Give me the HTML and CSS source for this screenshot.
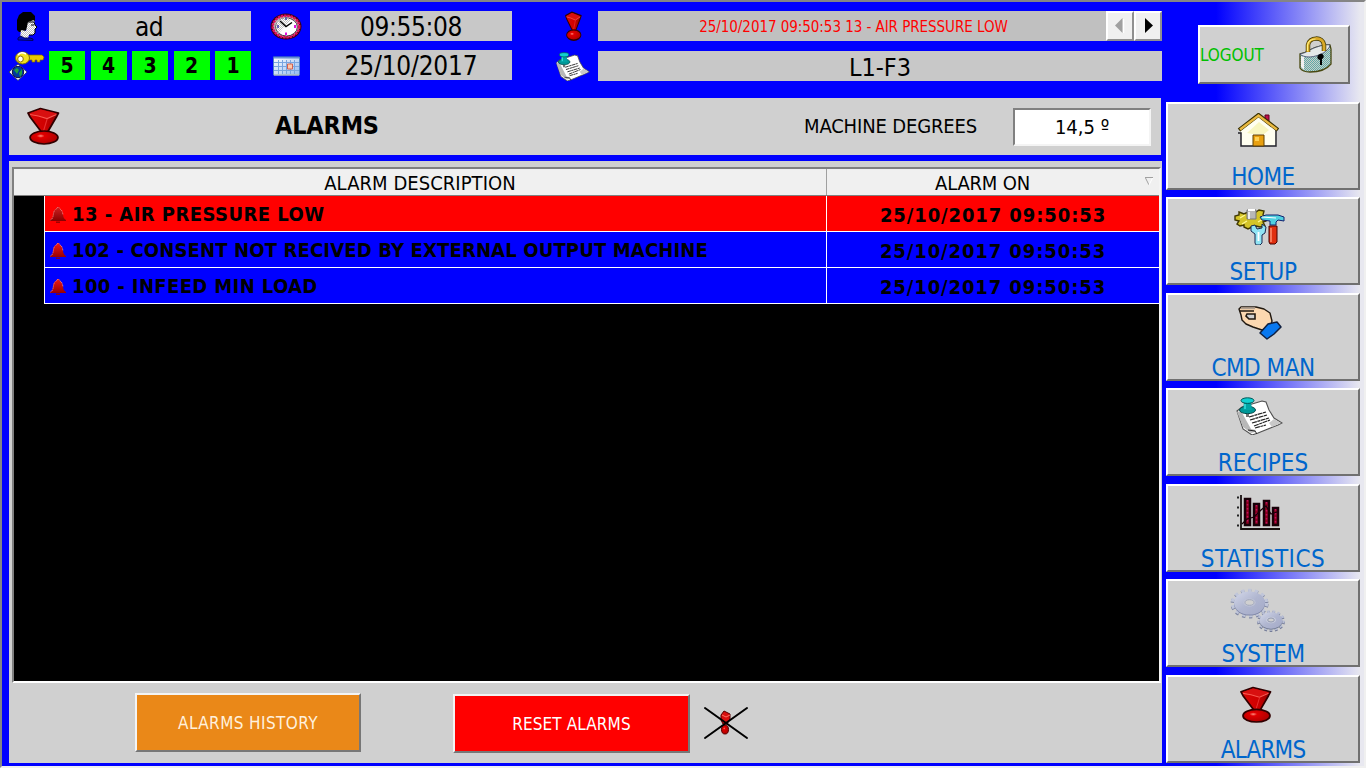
FILE: index.html
```html
<!DOCTYPE html>
<html lang="en">
<head>
<meta charset="utf-8">
<title>Alarms</title>
<link rel="stylesheet" href="styles.css">
</head>
<body>
<svg class="defs" aria-hidden="true">
  <defs>
    <linearGradient id="redCone" x1="0" y1="0" x2="1" y2="0"><stop offset="0" stop-color="#d80808"/><stop offset=".55" stop-color="#d00000"/><stop offset="1" stop-color="#8c0000"/></linearGradient>
    <radialGradient id="redBall" cx=".38" cy=".38" r=".7"><stop offset="0" stop-color="#ff9080"/><stop offset=".2" stop-color="#e00000"/><stop offset="1" stop-color="#a80000"/></radialGradient>
    <linearGradient id="bellFill" x1="0" y1="0" x2="0" y2="1"><stop offset="0" stop-color="#f01818"/><stop offset="1" stop-color="#980000"/></linearGradient>
    <linearGradient id="bellDark" x1="0" y1="0" x2="0" y2="1"><stop offset="0" stop-color="#d02020"/><stop offset="1" stop-color="#880000"/></linearGradient>
    <linearGradient id="gearFill" x1="0" y1="0" x2="1" y2="1"><stop offset="0" stop-color="#d4d8ea"/><stop offset=".5" stop-color="#b0b6d0"/><stop offset="1" stop-color="#a4aac8"/></linearGradient>
    <linearGradient id="calFill" x1="0" y1="0" x2="1" y2="1"><stop offset="0" stop-color="#fff"/><stop offset="1" stop-color="#90b8f0"/></linearGradient>
    <pattern id="dither" width="2" height="2" patternUnits="userSpaceOnUse"><rect width="2" height="2" fill="#c8d0c8"/><path d="M0 0h1v1H0zM1 1h1v1H1z" fill="#60a8a8"/></pattern>
    <pattern id="skin" width="2" height="2" patternUnits="userSpaceOnUse"><rect width="2" height="2" fill="#fff"/><path d="M0 0h1v1H0zM1 1h1v1H1z" fill="#c0c0c0"/></pattern>
  </defs>
  <symbol id="alarm" viewBox="0 0 32 38" preserveAspectRatio="none">
    <path d="M1 6 13 1.500l17.500 4.500-2 4-8.500 15h-6L3 10z" fill="url(#redCone)" stroke="#300000" stroke-width="1.700" stroke-linejoin="round"/>
    <path d="M2.500 6.500 13 2.500l16 4-9 4.500z" fill="#d81010"/>
    <path d="m3 7.500 8 1.500 8.500 2.500 9-4" fill="none" stroke="#f85850" stroke-width="1.200"/>
    <path d="m19.500 12-3.500 12" stroke="#e83030" fill="none"/>
    <ellipse cx="16.500" cy="30.500" rx="13.500" ry="6.500" fill="url(#redBall)" stroke="#300000" stroke-width="1.700"/>
  </symbol>
  <symbol id="note" viewBox="0 0 48 38" preserveAspectRatio="none">
    <path d="M2 14 7 10l20-6 4 1 3 8 5 8 8 5-4 2-20 8-6 2-9-6z" fill="#fff" stroke="#505050" stroke-width="1.100"/>
    <path d="m2 15 6 15 8 6 4-1 1-2-5-1L6 14z" fill="#b8b8b8"/><path d="m39 22 7 4-9 4-3-4z" fill="#c8c8c8"/>
    <path d="m13 33 7 1 2 3" fill="none" stroke="#222"/>
    <path d="m14 20 17-5M15 23l17-5M17 26l17-5M19 29l16-6M20 31l11-3" stroke="#222" stroke-width="1.200" stroke-dasharray="5 .6 3 .5" fill="none"/>
    <path d="M11 16v4h3v-3z" fill="#777"/>
    <ellipse cx="12.500" cy="13" rx="8" ry="3.700" fill="#009898" stroke="#004848"/>
    <path d="M9 5h7l1 8H8z" fill="#00a4a4"/>
    <ellipse cx="12.500" cy="3.600" rx="6.500" ry="2.800" fill="#10d0d0" stroke="#005858"/>
    <path d="M10 7v5" stroke="#50ffff"/>
  </symbol>
  <symbol id="bellShape" viewBox="0 0 16 16">
    <path d="M7 0h2l.5 1.500C12 2.500 12.600 5 13 8c.4 3 1.500 4 3 5v1H0v-1c2-1 2.700-2 3-5s1-5.500 3.500-6.500z"/>
    <path d="M.5 13C2.500 12 3 10 3.300 8 3.700 4.500 4.500 2.800 6.500 1.800L7.500.5h1.500L10 2c2 1 2.500 3 3 6" fill="none" stroke="#ffa0a0" stroke-width=".8" stroke-dasharray="1 .8"/>
    <path d="M6 15.200h4" stroke="#900000" stroke-width="1.300"/>
  </symbol>
</svg>

<div class="screen">
  <div class="left">
    <header class="status">
      <svg class="icon user" viewBox="0 0 22 30"><path d="M1 19V9l2-5 4-3h8l4 4v5l-4 2-3 5-4 4H3z" fill="#000"/><path d="m12 11 6-2 1 5 2 2-2 2v4l-2 2h-4l-1 3H4l1-8 5 1z" fill="url(#skin)"/><path d="M12 11h6l1 3 2 2-2 2v4l-2 2h-4M15 14h3" fill="none" stroke="#000"/><path d="M2 29v-2l3-2 3 2h6l3 1v1.500z" fill="#0010b8" stroke="#000060"/></svg>
      <div class="field name">ad</div>
      <svg class="icon clock" viewBox="0 0 32 27"><ellipse cx="16" cy="13.500" rx="15.500" ry="13" fill="#300018"/><ellipse cx="16" cy="13.500" rx="13.200" ry="10.800" fill="#b8c0c0" stroke="#e01058" stroke-width="2.600" stroke-dasharray="2.500 .7"/><ellipse cx="16.500" cy="14" rx="10.800" ry="9" fill="#fff" stroke="#301020" stroke-width=".8"/><path d="M7 9c5-5 11-5 14-2L9 20c-3-3-3-7-2-11z" fill="url(#skin)"/><path d="m10 8 6 5.500 6-4" fill="none" stroke="#000" stroke-width="1.500"/><path d="M16 4.500v2.500M8 12v3" stroke="#2020a0" stroke-width="1.300"/><path d="M16 19.500V22M25 12v3" stroke="#e010e0" stroke-width="2"/></svg>
      <div class="field time">09:55:08</div>
      <svg class="icon warn"><use href="#alarm"/></svg>
      <div class="field ticker"><span>25/10/2017 09:50:53 13 - AIR PRESSURE LOW</span>
        <button class="step" aria-label="Previous"><svg viewBox="0 0 24 26"><path d="M15.500 6v14" stroke="#fff" stroke-width="1.500"/><path d="M14.500 5v15L7 12.500z" fill="#a0a0a0"/></svg></button>
        <button class="step" aria-label="Next"><svg viewBox="0 0 24 26"><path d="M9 5v15l8-7.500z" fill="#000"/></svg></button>
      </div>
      <svg class="icon key" viewBox="0 0 36 30"><path d="m0 21 9-8 9 8-9 8.500z" fill="#fff" stroke="#203060" stroke-width=".8"/><circle cx="9" cy="21" r="5.700" fill="#0038a0" stroke="#101040"/><path d="m5 19 3-2 2 2-2 4zM10 22l3-4v5l-2 3z" fill="#20a040"/><path d="M18 4h15l2 2-1 3h-3v2h-3V9h-2v2h-3V9h-5z" fill="#e8c800" stroke="#806800" stroke-width=".7"/><ellipse cx="13.500" cy="7" rx="7" ry="6" fill="#f0e020" stroke="#807000"/><ellipse cx="11.500" cy="8" rx="2.800" ry="3" fill="#fff" stroke="#907000"/><path d="M9 4c2-3 6-2 8-1" stroke="#fff" stroke-width="1.500" fill="none"/></svg>
      <div class="levels"><b>5</b><b>4</b><b>3</b><b>2</b><b>1</b></div>
      <svg class="icon cal" viewBox="0 0 27 20"><path d="M.5 1h26v18H.5z" fill="url(#calFill)" stroke="#5080c8"/><path d="M.5 1.500h26" stroke="#3868c0" stroke-width="2.500" stroke-dasharray="1 1"/><path d="M1 6.500h25M1 10.500h25M1 14.500h25M5.500 4v15M9.500 4v15M13.500 4v15M17.500 4v15M21.500 4v15" stroke="#78a4e0"/><path d="M14.500 8h5v5h-5z" fill="#ffc8a8" stroke="#d06050"/><path d="M1 19h25" stroke="#d8d8b8"/></svg>
      <div class="field date">25/10/2017</div>
      <svg class="icon recipe"><use href="#note"/></svg>
      <div class="field line">L1-F3</div>
    </header>

    <section class="title">
      <svg class="titleicon"><use href="#alarm"/></svg>
      <h1>ALARMS</h1>
      <span class="deglabel">MACHINE DEGREES</span>
      <div class="deg">14,5 º</div>
    </section>

    <main class="panel">
      <div class="table">
        <div class="thead"><span class="c1">ALARM DESCRIPTION</span><span class="c2">ALARM ON<svg class="sort" viewBox="0 0 8 9"><path d="M0 .5h8" stroke="#a0a0a0"/><path d="m.5 1 3.500 7" stroke="#a0a0a0" fill="none"/><path d="m7.500 1-3.500 7" stroke="#fff" fill="none"/></svg></span></div>
        <div class="row red"><span class="c1"><svg class="dark"><use href="#bellShape"/></svg><i class="d1">13 - AIR PRESSURE LOW</i></span><span class="c2">25/10/2017 09:50:53</span></div>
        <div class="row"><span class="c1"><svg class="bell"><use href="#bellShape"/></svg><i class="d2">102 - CONSENT NOT RECIVED BY EXTERNAL OUTPUT MACHINE</i></span><span class="c2">25/10/2017 09:50:53</span></div>
        <div class="row"><span class="c1"><svg class="bell"><use href="#bellShape"/></svg><i class="d3">100 - INFEED MIN LOAD</i></span><span class="c2">25/10/2017 09:50:53</span></div>
      </div>
      <div class="actions">
        <button class="act history">ALARMS HISTORY</button>
        <button class="act reset">RESET ALARMS</button>
        <svg class="mute" viewBox="0 0 46 34"><path d="m18 9 3-4 6 3v5l-3 5h-4l-2-4z" fill="#d81010" stroke="#500"/><path d="m19 9 4 2 4-2" fill="none" stroke="#ff7060"/><ellipse cx="22" cy="23.500" rx="3.500" ry="4.500" fill="url(#redBall)" stroke="#500"/><path d="m2 2 42 30M44 2 2 32" stroke="#000" stroke-width="2" stroke-linecap="round"/></svg>
      </div>
    </main>
  </div>

  <aside class="side">
    <button class="logout"><span>LOGOUT</span>
      <svg viewBox="0 0 34 38"><path d="M1 19c6-1 9-4 14-6 6-2 11-4 16-3l1 4v15c-4 5-12 8-21 8-5 0-8-1-10-4z" fill="url(#dither)" stroke="#484810" stroke-width="1.300"/><path d="M1 19c6-1 9-4 14-6 6-2 11-4 16-3-1 6-10 11-20 12-5 0-8-1-10-3z" fill="#e4e8e8" stroke="#404868" stroke-width=".8"/><path d="M2 21v11l3 3V22z" fill="#f0f0f0"/><path d="M9 17v-7c1-8 15-9 16 0v6" fill="none" stroke="#403800" stroke-width="4.500"/><path d="M9 17v-7c1-8 15-9 16 0v6" fill="none" stroke="#d8a828" stroke-width="3"/><path d="M8.500 16v-6c1-4 4-6 8-6" fill="none" stroke="#fff080" stroke-width="1.200"/><path d="M21 19c4-1 5 4 2 5v6h-2v-5c-4-1-3-5 0-6z" fill="#000"/></svg>
    </button>
    <nav class="nav">
      <button class="home"><svg viewBox="0 0 42 34"><path d="M28 2h4v9l-4-3z" fill="#c0104c" stroke="#600020"/><path d="M4 17 22 3l18 14v16H4z" fill="#fffff0"/><path d="M10 20 22 9l10 8-5 4H16z" fill="#f8f6c0"/><path d="M1 20h3v13h35V17" fill="none" stroke="#202028" stroke-width="1.500"/><path d="M2 17 21.500 2 41 17" fill="none" stroke="#383000" stroke-width="4"/><path d="M3 16.500 21.500 2.500 40 16.500" fill="none" stroke="#e8b840" stroke-width="2.400"/><path d="M16 22h11v11H16z" fill="#e8a010" stroke="#604000"/><path d="M18 24h4v4h-4z" fill="#ffd050"/></svg><span>HOME</span></button>
      <button class="setup"><svg viewBox="0 0 52 38"><path d="m5 5 5 2 4-2h8l3-2 5 1-1 4 3 2v4l-3 1 2 4-5 1-4-1-4 1-4 2-4-2v-2l-4 1-3-2 2-3-4-1v-4l4-1z" fill="#d4c428" stroke="#403800" stroke-width="1.400"/><path d="m6 11 5-3M8 17l5-3M24 15l5-3" stroke="#fff890" stroke-width="1.300"/><path d="M13 3h9v9h-9z" fill="#b8b8b8" stroke="#777"/><path d="M14 2h7v2h-7z" fill="#fff"/><path d="M15 5v7" stroke="#fff" stroke-width="1.500"/><path d="m17 19 4-1 2 4 5-1v-4l4 3-1 6-3 2v8l-2 2h-4l-1-2v-9l-4-3z" fill="#90e4f4" stroke="#182850"/><path d="M24.500 25v9" stroke="#fff" stroke-width="1.800"/><path d="m26 10 6-2h12l6 2v4l-6-1-2 2v3h-6v-4l-8-1z" fill="#50d0e0" stroke="#102070"/><path d="m28 10 14 1" stroke="#fff"/><path d="M35 19h8v16l-2 2h-5l-1-2z" fill="#e03010" stroke="#400"/><path d="M37 21v14" stroke="#ff9070" stroke-width="1.500"/></svg><span>SETUP</span></button>
      <button class="cmd"><svg viewBox="0 0 44 34"><path d="m1 3 2-2h15l8 2 6 4 2 8-1 4-9 5-9-3-7-3-4-4-1-5z" fill="#fcd8b0" stroke="#201810" stroke-width="1.400" stroke-linejoin="round"/><path d="M3 2.200h14" stroke="#b0a090" stroke-width="2"/><path d="M2 5h14M9 8h8v5h-6l-3-3z" fill="#d0d0d0" stroke="#201810" stroke-width="1.600"/><path d="m22 27 8-9 9-2 4 5-7 7-7 5z" fill="#0878f0" stroke="#102040" stroke-width="1.500" stroke-linejoin="round"/></svg><span>CMD MAN</span></button>
      <button class="recipes"><svg><use href="#note"/></svg><span>RECIPES</span></button>
      <button class="stats"><svg viewBox="0 0 44 36"><path d="M5 0v34h39" fill="none" stroke="#181010" stroke-width="1.800"/><path d="M1 2.500h2M1 12.500h2M1 20.500h2M1 30.500h2" stroke="#222" stroke-width="2"/><path d="M9 4h5v26H9zM18 9h5v21h-5zM28 6h5v24h-5zM37 13h5v17h-5z" fill="#900020" stroke="#180008" stroke-width="2.500"/><path d="M11.500 5v24M20.500 10v19M30.500 7v22M39.500 14v15" stroke="#c01060" stroke-width="1.500" stroke-dasharray="1.500 2.500"/><path d="m6 29 5-5 7-2 7-7 5-4 5 8 6-2" fill="none" stroke="#180008" stroke-width="1.300"/></svg><span>STATISTICS</span></button>
      <button class="system"><svg viewBox="0 0 56 44"><g fill="none"><ellipse cx="19.500" cy="16" rx="17" ry="12.500" stroke="#8088a4" stroke-width="4" stroke-dasharray="3.200 3.600"/><ellipse cx="19.500" cy="15" rx="17" ry="12.500" stroke="#c0c6da" stroke-width="3.500" stroke-dasharray="3.200 3.600"/><ellipse cx="19.500" cy="16" rx="15.500" ry="11.500" fill="#8088a8"/><ellipse cx="19.500" cy="15" rx="15.500" ry="11.500" fill="url(#gearFill)"/><ellipse cx="19.500" cy="14.500" rx="6" ry="4" fill="#c4c8d8"/><ellipse cx="19.500" cy="14.500" rx="4.500" ry="2.800" fill="#d0d0d0" stroke="#a0a6bc"/><ellipse cx="41" cy="33.500" rx="12.500" ry="9" stroke="#747c98" stroke-width="3" stroke-dasharray="2.600 2.600"/><ellipse cx="41" cy="32.500" rx="12.500" ry="9" stroke="#b8bed4" stroke-width="2.600" stroke-dasharray="2.600 2.600"/><ellipse cx="41" cy="33.500" rx="11.300" ry="8.300" fill="#788098"/><ellipse cx="41" cy="32.500" rx="11.300" ry="8.200" fill="url(#gearFill)"/><ellipse cx="41" cy="32" rx="5" ry="3.200" fill="#c8ccdc"/><ellipse cx="41" cy="32" rx="3.300" ry="2" fill="#d0d0d0" stroke="#9098b0"/></g></svg><span>SYSTEM</span></button>
      <button class="alarms"><svg><use href="#alarm"/></svg><span>ALARMS</span></button>
    </nav>
  </aside>
</div>
</body>
</html>
```

FILE: styles.css
```css
* { box-sizing: border-box; }
body { margin: 0; font-family: "DejaVu Sans Condensed", "DejaVu Sans", sans-serif; font-stretch: condensed; color: #000; }
button { font: inherit; margin: 0; padding: 0; }
svg { display: block; flex: none; }
.defs { position: absolute; width: 0; height: 0; }
span, i, h1 { white-space: nowrap; }

.screen {
  width: 1366px; height: 768px; overflow: hidden; display: flex;
  padding: 9px 4px 3px 7px;
  border: 2px solid; border-color: #858585 #f0f0f0 #f0f0f0 #858585;
  background: linear-gradient(90deg, #00f 0, #00f 1214px, #e8e8f0 1358px);
}
.left { width: 1153px; display: flex; flex-direction: column; }

.status {
  height: 70px; display: grid;
  grid-template-columns: 40px 202px 59px 202px 86px 564px;
  grid-template-rows: 30px 30px; row-gap: 10px; align-items: center;
}
.field { height: 30px; background: #c8c8c8; font-size: 26px; line-height: 33px; text-align: center; letter-spacing: -.2px; }
.name { letter-spacing: -.6px; padding-right: 2px; }
.time { letter-spacing: -.35px; }
.date { height: 30px; margin-top: -2px; line-height: 32px; }
.ticker { background: #c0c0c0; display: flex; color: #f00; font-size: 15px; line-height: 32px; letter-spacing: -.05px; }
.ticker span { flex: 1; padding-left: 3px; }
.ticker .step { width: 28px; height: 30px; background: #f0f0f0; border: 2px solid; border-color: #fff #909090 #909090 #fff; }
.step svg { width: 24px; height: 26px; }
.line { font-size: 25px; letter-spacing: 0; }
.icon { justify-self: start; }
.user { width: 22px; height: 30px; margin-left: 7px; }
.clock { width: 32px; height: 27px; margin-left: 19px; }
.warn { width: 17px; height: 30px; margin-left: 53px; }
.key { width: 36px; height: 30px; }
.cal { width: 27px; height: 20px; margin-left: 22px; }
.recipe { width: 35px; height: 29px; margin-left: 43px; }
.levels { display: flex; justify-content: space-between; height: 29px; align-self: start; }
.levels b { width: 36px; background: #0f0; text-align: center; font-size: 21px; line-height: 30px; }

.title { width: 1152px; height: 57px; margin-top: 17px; background: #d0d0d0; display: flex; align-items: center; flex: none; }
.titleicon { width: 33px; height: 38px; margin-left: 18px; margin-top: -2px; }
.title h1 { width: 105px; margin: -2px 0 0 215px; font-size: 25px; line-height: 30px; letter-spacing: -.2px; }
.deglabel { width: 174px; margin: -2px 0 0 424px; font-size: 20px; letter-spacing: -.15px; }
.deg { width: 138px; height: 38px; margin-left: 35px; background: #fff; border: 2px solid; border-color: #808080 #f4f4f4 #f4f4f4 #808080; text-align: center; font-size: 20px; line-height: 35px; letter-spacing: 0; }

.panel { height: 602px; margin-top: 6px; padding: 6px 0 0 3px; background: #d0d0d0; }
.table { width: 1149px; height: 516px; background: #000; border: 2px solid; border-color: #808080 #f4f4f4 #fff #808080; }
.thead { height: 27px; display: flex; background: #f0f0f0; border-bottom: 1px solid #808080; font-size: 20px; line-height: 28px; text-align: center; letter-spacing: .05px; }
.thead .c1 { width: 813px; border-right: 1px solid #a0a0a0; }
.thead .c2 { flex: 1; position: relative; padding-right: 21px; letter-spacing: -.2px; }
.sort { position: absolute; width: 8px; height: 9px; right: 6px; top: 8px; }
.row { height: 36px; margin-left: 30px; display: flex; background: #00f; border-left: 1px solid #fff; border-bottom: 1px solid #fff; font-size: 20px; font-weight: bold; line-height: 37px; }
.row.red { background: #f00; }
.row .c1 { width: 782px; padding-left: 5px; display: flex; align-items: center; gap: 6px; border-right: 1px solid #fff; }
.row svg { width: 16px; height: 16px; margin-top: 2px; }
.bell { fill: url(#bellFill); }
.dark { fill: url(#bellDark); }
.row i { font-style: normal; padding-top: 2px; }
.d1 { letter-spacing: .45px; }
.d2 { letter-spacing: .15px; }
.d3 { letter-spacing: .38px; }
.row .c2 { flex: 1; text-align: center; letter-spacing: .9px; line-height: 38px; }

.actions { display: flex; padding: 10px 0 0 123px; }
.act { border: 2px solid; border-color: #f4f4f4 #777 #777 #f4f4f4; font-size: 17px; color: #fff; letter-spacing: .4px; }
.history { width: 226px; height: 59px; background: #ea8818; color: #fff0dc; }
.reset { width: 237px; height: 59px; margin: 1px 0 0 92px; background: #f00; letter-spacing: .1px; }
.mute { width: 46px; height: 34px; margin: 13px 0 0 13px; }

.side { width: 195px; margin-left: 4px; }
.side button { background: #d0d0d0; border: 2px solid; border-color: #fff #707070 #707070 #fff; }
.logout { display: flex; align-items: center; width: 152px; height: 59px; margin: 14px 0 0 32px; color: #00c000; font-size: 17px; }
.logout span { width: 98px; text-align: left; letter-spacing: -.1px; }
.logout svg { width: 34px; height: 38px; margin-left: 1px; margin-top: -1px; }
.nav { display: flex; flex-direction: column; gap: 7.500px; margin-top: 17.700px; }
.nav button { width: 194px; height: 88px; display: flex; flex-direction: column; align-items: center; color: #06c; font-size: 24px; line-height: 28px; }
.nav span { margin-top: auto; margin-bottom: -3px; letter-spacing: -.5px; }
.nav .recipes span { letter-spacing: 0; }
.nav .stats span { letter-spacing: .5px; }
.nav .alarms span { letter-spacing: -.8px; }
.home svg { width: 42px; height: 34px; margin: 9px 10px 0 0; }
.setup svg { width: 52px; height: 38px; margin: 8px 7px 0 0; }
.cmd svg { width: 44px; height: 34px; margin: 11px 6px 0 0; }
.recipes svg { width: 48px; height: 38px; margin: 7px 9px 0 0; }
.stats svg { width: 44px; height: 36px; margin: 9px 10px 0 0; }
.system svg { width: 56px; height: 44px; margin: 7px 10px 0 0; }
.alarms svg { width: 32px; height: 37px; margin: 9px 14px 0 0; }
```
